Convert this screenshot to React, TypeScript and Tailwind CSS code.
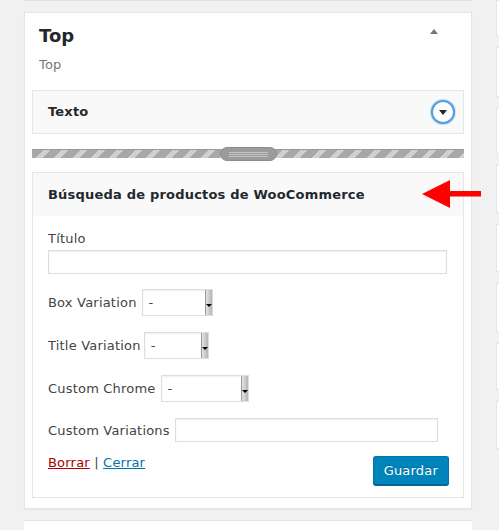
const sideBoxes = [36, 50, 46, 48, 48, 49, 47, 48];

const Select = ({ width }: { width: string }) => (
  <div
    className={`${width} h-[27px] flex items-stretch border border-[#dddddd] bg-white shadow-[inset_0_1px_2px_rgba(0,0,0,0.07)]`}
  >
    <span className="flex-1 pl-[6px] leading-[25px]">-</span>
    <span className="w-[7px] flex items-center justify-center border-l border-[#9a9a9a] bg-[linear-gradient(to_right,#e4e4e4,#b4b4b4)]">
      <span className="mt-[6px] w-0 h-0 border-l-[3px] border-r-[3px] border-t-[3px] border-l-transparent border-r-transparent border-t-black" />
    </span>
  </div>
);

const Field = ({
  label,
  gap = "gap-[5px]",
  children,
}: {
  label: string;
  gap?: string;
  children: React.ReactNode;
}) => (
  <div className={`flex items-center ${gap}`}>
    <label className="leading-[19px]">{label}</label>
    {children}
  </div>
);

export default function App() {
  return (
    <div className="relative h-[530px] w-[499px] overflow-hidden bg-[#f1f1f1] flex font-['DejaVu_Sans',sans-serif] text-[13px] tracking-[0.2px] text-[#444444]">
      {/* main column */}
      <div className="w-[472px] pl-[24px] flex flex-col gap-[11px] shrink-0">
        <div className="h-[1px] bg-white border-b border-[#e2e2e2] shrink-0" />

        <div className="bg-white border border-[#e5e5e5] shadow-[0_1px_1px_rgba(0,0,0,0.04)] px-[7px] pb-[10px] shrink-0">
          <div className="pt-[11px] px-[7px] flex justify-between">
            <div>
              <h2 className="text-[18px] leading-[24px] font-bold tracking-normal text-[#23282d]">Top</h2>
              <p className="mt-[7px] leading-[19px] text-[#72777c]">Top</p>
            </div>
            <span className="mt-[5px] mr-[19px] w-0 h-0 border-l-[4px] border-r-[4px] border-b-[5px] border-l-transparent border-r-transparent border-b-[#72777c]" />
          </div>

          {/* Texto widget collapsed */}
          <div className="mt-[16px] h-[44px] border border-[#e5e5e5] bg-[#f9f9f9] flex items-center justify-between pl-[15px] pr-[8px]">
            <span className="font-bold text-[#23282d]">Texto</span>
            <span className="w-[24px] h-[24px] rounded-full border-2 border-[#5b9dd9] shadow-[0_0_2px_rgba(30,140,190,0.8)] bg-white flex items-center justify-center">
              <span className="mt-[1px] w-0 h-0 border-l-[4px] border-r-[4px] border-t-[5px] border-l-transparent border-r-transparent border-t-[#23282d]" />
            </span>
          </div>

          {/* drag separator */}
          <div className="mt-[15px] h-[9px] border-t border-[#999999] bg-[repeating-linear-gradient(135deg,#a8a8a8_0px,#a8a8a8_8px,#d0d0d0_8px,#d0d0d0_13px)] flex items-center justify-center">
            <div className="w-[57px] h-[14px] rounded-full bg-[#9b9b9b] border border-[#8c8c8c] flex flex-col justify-center gap-[1px] px-[8px]">
              <span className="h-[1px] bg-[#c4c4c4]" />
              <span className="h-[1px] bg-[#c4c4c4]" />
              <span className="h-[1px] bg-[#c4c4c4]" />
            </div>
          </div>

          {/* WooCommerce search widget */}
          <div className="mt-[14px] border border-[#e5e5e5] bg-white">
            <div className="h-[43px] bg-[#f9f9f9] flex items-center px-[15px]">
              <span className="font-bold text-[#23282d]">Búsqueda de productos de WooCommerce</span>
            </div>
            <div className="px-[15px] pt-[13px] pb-[12px] flex flex-col">
              <label className="leading-[19px]">Título</label>
              <input className="mt-[2px] h-[24px] w-[399px] border border-[#dddddd] shadow-[inset_0_1px_2px_rgba(0,0,0,0.07)] outline-none" />

              <div className="mt-[15px]">
                <Field label="Box Variation">
                  <Select width="w-[71px]" />
                </Field>
              </div>
              <div className="mt-[16px]">
                <Field label="Title Variation" gap="gap-[3px]">
                  <Select width="w-[65px]" />
                </Field>
              </div>
              <div className="mt-[16px]">
                <Field label="Custom Chrome">
                  <Select width="w-[88px]" />
                </Field>
              </div>
              <div className="mt-[16px]">
                <Field label="Custom Variations">
                  <input className="h-[24px] w-[263px] border border-[#dddddd] shadow-[inset_0_1px_2px_rgba(0,0,0,0.07)] outline-none" />
                </Field>
              </div>

              <div className="mt-[11px] flex justify-between items-start">
                <div className="leading-[19px]">
                  <a className="text-[#aa0000] underline">Borrar</a>
                  {" | "}
                  <a className="text-[#0073aa] underline">Cerrar</a>
                </div>
                <button className="mt-[3px] mr-[-1px] h-[29px] px-[10px] rounded-[3px] bg-[#0085ba] border border-[#0073aa] border-b-[#006799] shadow-[0_1px_0_#006799] text-white [text-shadow:0_-1px_1px_#006799]">
                  Guardar
                </button>
              </div>
            </div>
          </div>
        </div>

        <div className="h-[20px] bg-white border-t border-[#e5e5e5] shrink-0" />
      </div>

      {/* neighbouring sidebars */}
      <div className="ml-[24px] flex flex-col gap-[11px] shrink-0">
        {sideBoxes.map((h, i) => (
          <div
            key={i}
            style={{ height: h }}
            className="w-[10px] bg-white border border-[#e5e5e5]"
          />
        ))}
      </div>

      {/* red annotation arrow */}
      <svg className="absolute left-[420px] top-[178px]" width="64" height="32" viewBox="0 0 64 32">
        <polygon points="2,16 30,2 30,13 61,13 61,18.5 30,18.5 30,30" fill="#ff0000" />
      </svg>
    </div>
  );
}
